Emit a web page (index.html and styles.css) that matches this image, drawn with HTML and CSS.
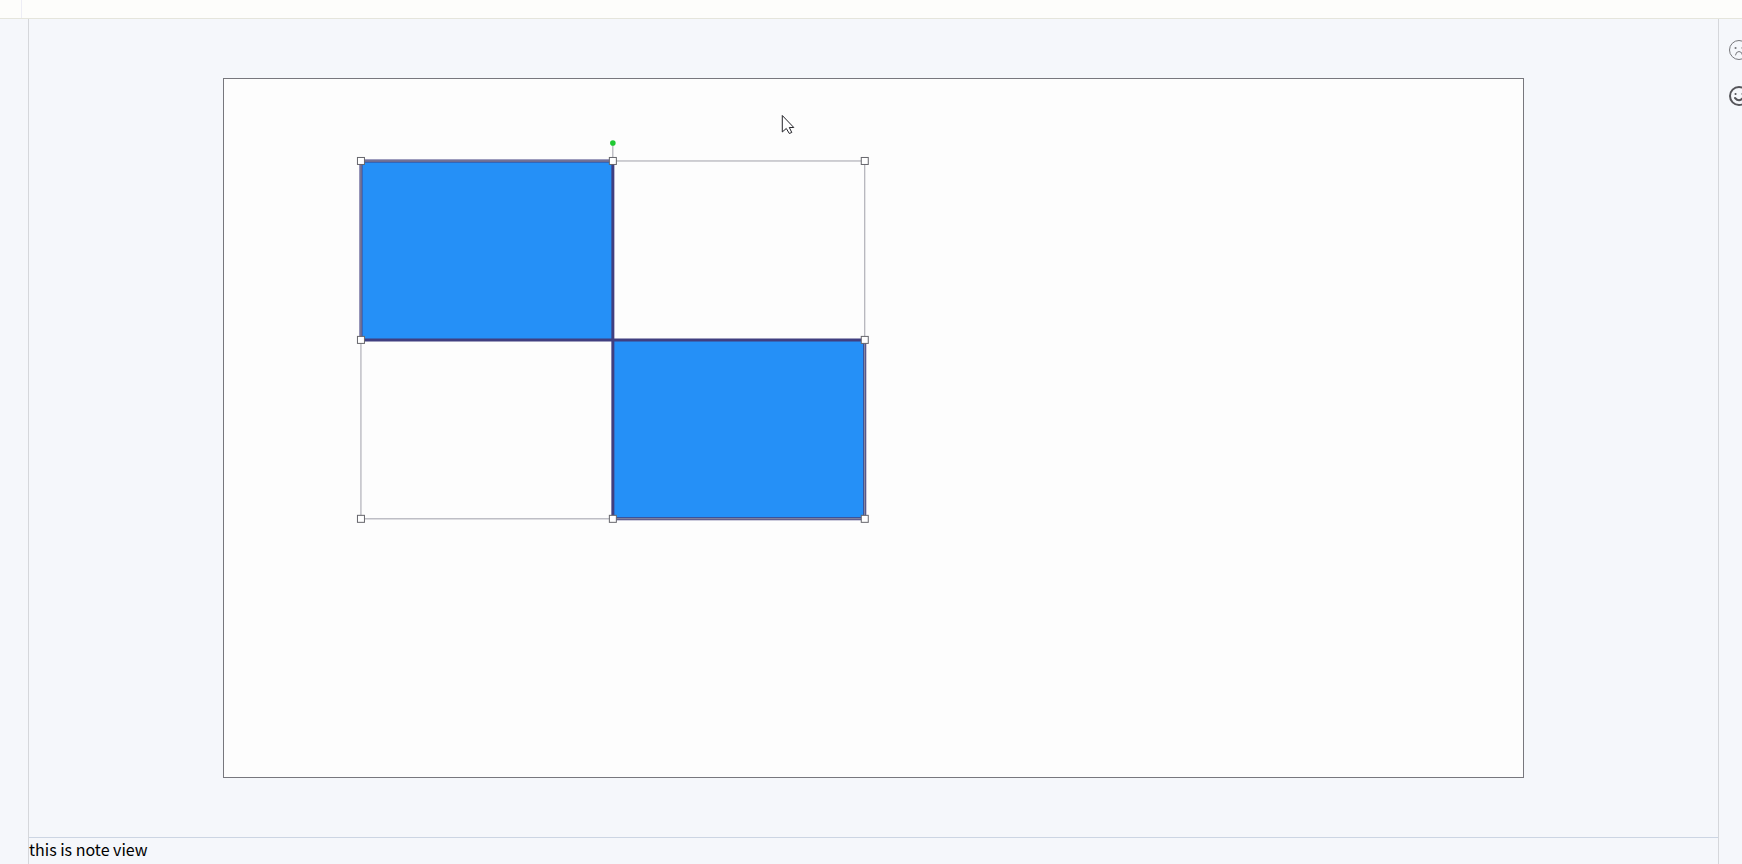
FILE: index.html
```
<!DOCTYPE html>
<html lang="en">
<head>
<meta charset="utf-8">
<meta name="viewport" content="width=device-width, initial-scale=1">
<title>Note view</title>
<link rel="stylesheet" href="styles.css">
</head>
<body>
<div class="app">
  <header class="ruler"></header>
  <div class="workspace">
    <div class="gutter"></div>
    <main class="center">
      <section class="stage">
        <div class="slide">
          <svg class="drawing" viewBox="0 0 1299 699" aria-label="Slide drawing">
            <path class="shape" d="M137 82H389V261H137ZM389 261H641V440H389Z"/>
            <path class="selection" d="M389 64V82M137 82H641V440H137Z"/>
            <circle class="rotate" cx="389" cy="64" r="2.800"/>
            <g class="handles">
              <rect x="133.500" y="78.500" width="7" height="7"/>
              <rect x="385.500" y="78.500" width="7" height="7"/>
              <rect x="637.500" y="78.500" width="7" height="7"/>
              <rect x="133.500" y="257.500" width="7" height="7"/>
              <rect x="637.500" y="257.500" width="7" height="7"/>
              <rect x="133.500" y="436.500" width="7" height="7"/>
              <rect x="385.500" y="436.500" width="7" height="7"/>
              <rect x="637.500" y="436.500" width="7" height="7"/>
            </g>
            <path class="cursor" d="M558.500 36.500V53L562.500 49.500L565.500 54.500L568 53.500L565.500 48.500H570Z"/>
          </svg>
        </div>
      </section>
      <section class="notes"><p class="note">this is note view</p></section>
    </main>
    <aside class="reactions">
      <button class="reaction" type="button" aria-label="Unhappy">
        <svg class="face face-sad" viewBox="0 0 22 22"><circle cx="11" cy="11" r="9.500"/><path d="M7.500 16Q8 12.500 11 12.500T14.500 16"/><path class="eyes" d="M7.500 9h.1M14.500 9h.1"/></svg>
      </button>
      <button class="reaction" type="button" aria-label="Happy">
        <svg class="face face-happy" viewBox="0 0 22 22"><circle cx="11" cy="11" r="9"/><path class="smile" d="M7 13Q11 17.500 15 13"/><path class="eyes" d="M7.500 9h.1M14.500 9h.1"/></svg>
      </button>
    </aside>
  </div>
</div>
</body>
</html>
```
FILE: styles.css
```
* {
  box-sizing: border-box;
}

body {
  margin: 0;
  overflow: hidden;
  font-family: "Noto Sans CJK SC", "Noto Sans", sans-serif;
  color: #000;
  background: #f5f7fb;
}

.app {
  display: flex;
  flex-direction: column;
  height: 100vh;
}

.ruler {
  flex: none;
  height: 19px;
  padding-left: 21px;
  background: #fdfdfb;
  border-bottom: 1px solid #e5e5dc;
}

.ruler::before {
  content: "";
  display: block;
  height: 100%;
  border-left: 1px solid #ededf5;
}

.workspace {
  flex: 1;
  display: grid;
  grid-template-columns: 28px 1fr 23px;
  min-height: 0;
}

.center {
  display: flex;
  flex-direction: column;
  min-width: 0;
  border-left: 1px solid #d5d7db;
  border-right: 1px solid #d5d7db;
}

.stage {
  flex: 1;
  display: flex;
  align-items: center;
  justify-content: center;
  min-height: 0;
}

.slide {
  width: 77%;
  background: #fdfdfd;
  border: 1px solid #77777d;
}

.drawing {
  display: block;
  width: 100%;
}

.shape {
  fill: #2590f7;
  stroke: #403f80;
  stroke-width: 3;
}

.selection {
  fill: none;
  stroke: #a0a0aa;
}

.rotate {
  fill: #1fc932;
}

.handles {
  fill: #fff;
  stroke: #66666c;
}

.cursor {
  fill: #fff;
  stroke: #222228;
  stroke-linejoin: round;
}

.notes {
  flex: none;
  height: 27px;
  border-top: 1px solid #ccd5e3;
}

.note {
  margin: 0;
  font-size: 16px;
  line-height: 22px;
}

.reactions {
  display: flex;
  flex-direction: column;
  gap: 24px;
  padding: 20px 0 0 9px;
}

.reaction {
  width: 22px;
  height: 22px;
  padding: 0;
  border: 0;
  background: none;
}

.face {
  display: block;
  width: 22px;
  height: 22px;
  fill: none;
  stroke-linecap: round;
}

.face-sad {
  stroke: #77777c;
  stroke-width: 1;
}

.face-happy {
  stroke: #55555a;
  stroke-width: 2;
}

.eyes {
  stroke-width: 2;
}
```
